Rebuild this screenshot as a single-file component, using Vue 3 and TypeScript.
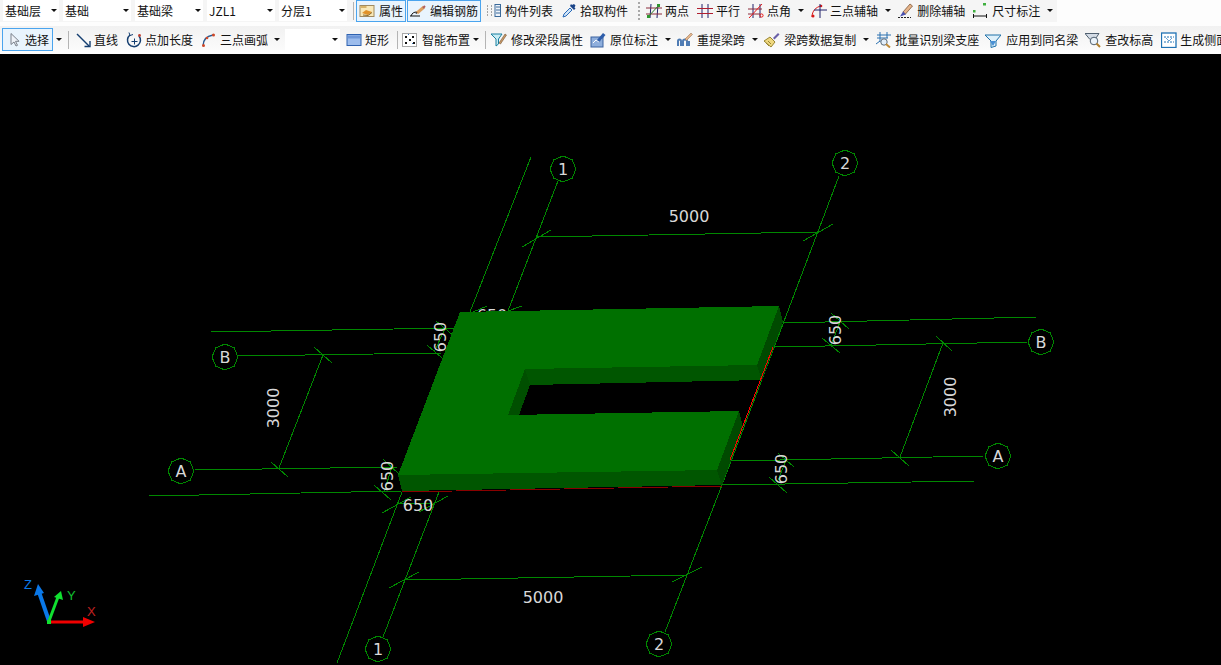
<script setup lang="ts">
type Item = {
  k: 'combo' | 'tool' | 'arrow' | 'sep' | 'grip' | 'active'
  label?: string
  icon?: string
  ml: number
  slot?: number
  w?: number
}

const tool = (label: string, icon: string, ml = 8, slot = 19): Item => ({ k: 'tool', label, icon, ml, slot })
const active = (label: string, icon: string, ml: number, slot: number): Item => ({ k: 'active', label, icon, ml, slot })
const arrow = (ml = 5): Item => ({ k: 'arrow', ml })
const sep = (ml: number): Item => ({ k: 'sep', ml })
const combo = (label: string, w: number, ml = 4): Item => ({ k: 'combo', label, w, ml })

const row1: Item[] = [
  combo('基础层', 56, 3),
  combo('基础', 68),
  combo('基础梁', 68),
  combo('JZL1', 68),
  combo('分层1', 68),
  sep(6),
  active('属性', 'attr', 2, 20),
  active('编辑钢筋', 'rebar', 1, 20),
  tool('构件列表', 'list', 5),
  tool('拾取构件', 'pick'),
  { k: 'grip', ml: 10 },
  tool('两点', 'two', 6),
  tool('平行', 'parallel'),
  tool('点角', 'angle'),
  arrow(),
  tool('三点辅轴', 'three', 6),
  arrow(),
  tool('删除辅轴', 'erase', 5, 20),
  tool('尺寸标注', 'dim', 7, 20),
  arrow(),
]

const row2: Item[] = [
  active('选择', 'cursor', 2, 17),
  arrow(1),
  sep(5),
  tool('直线', 'line', 7, 18),
  tool('点加长度', 'addLen'),
  tool('三点画弧', 'arc'),
  arrow(4),
  combo('', 55),
  tool('矩形', 'rect', 6),
  sep(8),
  tool('智能布置', 'smart', 4, 20),
  arrow(1),
  sep(5),
  tool('修改梁段属性', 'editSeg', 5, 20),
  tool('原位标注', 'orig', 7, 20),
  arrow(),
  tool('重提梁跨', 'lift', 5, 20),
  arrow(),
  tool('梁跨数据复制', 'copy', 5, 20),
  arrow(),
  tool('批量识别梁支座', 'batch', 5, 20),
  tool('应用到同名梁', 'apply', 6, 21),
  tool('查改标高', 'check', 7, 20),
  tool('生成侧面', 'side', 8, 19),
]

const icons: Record<string, string> = {
  attr: '<rect x="1" y="2.500" width="14" height="11" fill="#f8e8b8" stroke="#a08a60"/><rect x="1.500" y="3" width="6" height="2" fill="#d8b468"/><path d="M3 10l4-3 6 2-4 3z" fill="#e0922a"/><path d="M4 12l5 .5 4-3" fill="none" stroke="#8a6a30"/>',
  rebar: '<path d="M0 13h10" stroke="#111" fill="none"/><path d="M1 13c1-3 3-4 6-4" stroke="#111" fill="none"/><path d="M7 10l7-6" stroke="#dca060" stroke-width="3" fill="none"/><path d="M13 5l2-2" stroke="#b06060" stroke-width="2" fill="none"/><path d="M6 11l1-2" stroke="#333"/>',
  list: '<path d="M1 3h2M1 6h2M1 9h2M1 12h2M5 3h2M5 6h2M5 9h2M5 12h2" stroke="#555" stroke-dasharray="1 1" fill="none"/><rect x="9" y="1.500" width="5.500" height="12" fill="#eef3fa" stroke="#3a6a9a"/><path d="M10 4h4M10 7h4M10 10h4" stroke="#3a6a9a" fill="none"/>',
  pick: '<path d="M2 14l1-3 6-6 2 2-6 6z" fill="#cfe4f8" stroke="#2a6ab8"/><path d="M9 3l4 4 1.500-1.500-1-1 1-2L13 1l-2 1-1-1z" fill="#1a4488"/>',
  two: '<path d="M5 1L4 15M12 1l-1 14" stroke="#20206a" fill="none"/><path d="M0 5h16M0 11h16" stroke="#8a2a3a" fill="none"/><path d="M1 15L14 1" stroke="#2a7a2a" fill="none"/><rect x="1" y="12" width="3" height="3" fill="#2f962f"/><rect x="11" y="1" width="3" height="3" fill="#2f962f"/>',
  parallel: '<path d="M5 1v14M11 1v14" stroke="#20206a" fill="none"/><path d="M0 5.500h16M0 10.500h16" stroke="#b01f30" fill="none"/>',
  angle: '<path d="M5 1v14M12 1v14" stroke="#20206a" fill="none"/><path d="M0 6h14M0 11h12" stroke="#8a2a3a" fill="none"/><path d="M1 15L14 1" stroke="#e81818" fill="none"/><circle cx="13.500" cy="12.500" r="1.600" fill="none" stroke="#e81818"/>',
  three: '<path d="M1 14c0-6 4-10 9-11" stroke="#d81818" fill="none"/><circle cx="2" cy="13" r="1.500" fill="#d81818"/><circle cx="10" cy="3" r="1.300" fill="#d81818"/><path d="M9 1v14M3 7h13" stroke="#20206a" fill="none"/>',
  erase: '<path d="M1 14.500h13" stroke="#222" stroke-dasharray="2 1" fill="none"/><path d="M6 9l7-8 2.500 2-7 8z" fill="#e6b48a" stroke="#704828" stroke-width=".7"/><path d="M3 13.500l3-5 3 3z" fill="#4a52b0"/>',
  dim: '<rect x="1" y="7" width="2.500" height="2.500" fill="#40b040"/><rect x="11" y="0" width="3" height="2.500" fill="#40b040"/><path d="M1.500 11v4M14.500 11v4M1.500 13h13" stroke="#111" fill="none"/>',
  cursor: '<path d="M3 1.500v11l3-2.500 2 4 1.500-.7-2-4h3.600z" fill="#eef2f8" stroke="#7a808a"/>',
  line: '<path d="M1 2l12 12" stroke="#143e70" stroke-width="1.400" fill="none"/><path d="M14 9v5.500H8.500" stroke="#143e70" stroke-width="1.400" fill="none"/>',
  addLen: '<path d="M4 3a6.500 6.500 0 1 0 9 1" stroke="#143e70" stroke-width="1.500" fill="none"/><path d="M3 .5l1 3 3-1" stroke="#143e70" fill="none"/><path d="M8.500 6.500v6M5.500 9.500h6" stroke="#143e70" fill="none"/><circle cx="13.500" cy="3.500" r="1.400" fill="#c04030"/>',
  arc: '<path d="M2 14c0-6 4-10 10-11" stroke="#2a5a90" stroke-width="1.400" fill="none"/><circle cx="2.500" cy="13.500" r="1.500" fill="#d04828"/><circle cx="6" cy="6" r="1.300" fill="#d04828"/><circle cx="12.500" cy="3" r="1.500" fill="#d04828"/>',
  rect: '<rect x="1" y="2.500" width="14" height="11" fill="#9cbcec" stroke="#2f62b0"/><rect x="2" y="3.500" width="12" height="3" fill="#6f97d8"/>',
  smart: '<rect x=".5" y="1.500" width="14" height="13" fill="#fff" stroke="#555" stroke-dasharray="1 1"/><path d="M3 4h2v2H3zM10 4h2v2h-2zM7 7h2v2H7zM3 10h2v2H3zM11 10h2v2h-2z" fill="#111"/><path d="M6 2h1v1H6zM10 11h1v1h-1z" fill="#3a78c0"/>',
  editSeg: '<path d="M0 2h11L7.500 7v5L5 14V7z" fill="#c8ecf4" stroke="#1a80a0"/><path d="M8 11l6-9 1.500 1-6 9z" fill="#c89a68" stroke="#604020" stroke-width=".5"/>',
  orig: '<rect x="1" y="5" width="12" height="10" fill="#8eaedc" stroke="#3a62a0"/><path d="M3 11l3-3 3 2 3-3" stroke="#fff" fill="none"/><path d="M7 8l6-7 2.500 2-6 7z" fill="#2f5eaa"/>',
  lift: '<path d="M1 14V9c0-2 3-2 3 0v5M6 14V9c0-2 4-2 4 0v5M12 14V9" stroke="#4f7cb4" stroke-width="2" fill="none"/><path d="M8 7l6-6 1.500 1.500-6 6z" fill="#e4b48a" stroke="#906a48" stroke-width=".5"/>',
  copy: '<path d="M0 9l7 6 4-5-5-5z" fill="#efd880" stroke="#988430"/><path d="M9 6l5-5 1.500 1.500-5 5z" fill="#6a60a8"/><path d="M2 11l3 3M4 9l3 3" stroke="#988430" fill="none"/>',
  batch: '<path d="M2 3h14M2 6h11M5 0v10M12 0v6M1 12l4-3" stroke="#2a70b0" fill="none"/><circle cx="9" cy="10" r="3.200" fill="#e2eefa" stroke="#5a6a7a"/><path d="M11 12l4 3.500" stroke="#c08a38" stroke-width="2" fill="none"/>',
  apply: '<path d="M0 3h16l-5 6v5l-5 1.500V9z" fill="#dff0fa" stroke="#1f70a8"/><path d="M5 9h6l-3 5z" fill="#4a90d4"/>',
  check: '<path d="M0 1.500h14l-4 6H5z" fill="#d4dce6" stroke="#506070"/><circle cx="9" cy="9" r="3.800" fill="#eaf3fb" stroke="#506070"/><path d="M11.500 11.500l3.500 3.500" stroke="#b08030" stroke-width="2" fill="none"/>',
  side: '<rect x=".5" y="1" width="14.500" height="14.500" fill="#fff" stroke="#1f72b4" stroke-width="1.300"/><path d="M3 5h10M3 10h10" stroke="#1f72b4" stroke-dasharray="2 1" fill="none"/><path d="M5 6l3 3 3-3" stroke="#6aa0d0" fill="none"/>',
}

// canvas geometry, page coordinates
const lines: number[][] = [
  [531, 157, 470, 312], [558, 181, 508, 311], [839, 176, 722, 485],
  [337, 663, 402, 492], [383, 637, 439, 492], [665, 632, 722, 485],
  [211, 332, 455, 328], [238, 356, 442, 353], [195, 470, 398, 467], [149, 496, 402, 491],
  [783, 323, 1037, 317], [775, 347, 1028, 342], [730, 461, 984, 456], [722, 485, 975, 481],
  [536, 237, 818, 232], [522, 247, 551, 230], [803, 241, 833, 224],
  [405, 580, 687, 575], [389, 588, 419, 572], [672, 582, 702, 567],
  [323, 355, 279, 468], [314, 347, 332, 363], [271, 462, 288, 477],
  [943, 343, 900, 457], [936, 336, 952, 351], [891, 450, 909, 466],
  [427, 345, 442, 358], [436, 321, 455, 337], [445, 329, 434, 352],
  [374, 485, 391, 500], [383, 459, 400, 475], [392, 467, 384, 492],
  [382, 513, 411, 497], [419, 512, 448, 496], [398, 504, 433, 503],
  [473, 312, 487, 306], [508, 311, 522, 306],
  [831, 313, 849, 329], [822, 338, 840, 353], [840, 322, 831, 345],
  [778, 453, 794, 467], [769, 477, 787, 493], [786, 460, 777, 483],
]

const axisMarks = [
  { x: 563, y: 169, t: '1' }, { x: 845, y: 163, t: '2' },
  { x: 378, y: 649, t: '1' }, { x: 659, y: 644, t: '2' },
  { x: 225, y: 357, t: 'B' }, { x: 181, y: 471, t: 'A' },
  { x: 1041, y: 342, t: 'B' }, { x: 998, y: 456, t: 'A' },
]

const octagon = (cx: number, cy: number) =>
  Array.from({ length: 8 }, (_, i) => {
    const a = (i * Math.PI) / 4
    return `${cx + 13 * Math.sin(a)},${cy - 13 * Math.cos(a)}`
  }).join(' ')

const dims = [
  { x: 689, y: 216, t: '5000', r: 0 }, { x: 543, y: 597, t: '5000', r: 0 },
  { x: 273, y: 408, t: '3000', r: -90 }, { x: 950, y: 397, t: '3000', r: -90 },
  { x: 440, y: 337, t: '650', r: -90 }, { x: 387, y: 476, t: '650', r: -90 },
  { x: 835, y: 330, t: '650', r: -90 }, { x: 781, y: 469, t: '650', r: -90 },
  { x: 418, y: 505, t: '650', r: 0 }, { x: 492, y: 315, t: '650', r: 0 },
]
</script>

<template>
  <div class="page">
    <div class="toolbar">
      <div class="row row-top">
        <div class="row-inner">
          <template v-for="(item, i) in row1" :key="i">
            <div v-if="item.k === 'combo'" class="combo" :style="{ marginLeft: item.ml + 'px', width: item.w + 'px' }">
              <span>{{ item.label }}</span><i class="caret"></i>
            </div>
            <div v-else-if="item.k === 'sep'" class="sep" :style="{ marginLeft: item.ml + 'px' }"></div>
            <div v-else-if="item.k === 'grip'" class="grip" :style="{ marginLeft: item.ml + 'px' }"></div>
            <div v-else-if="item.k === 'arrow'" class="arrow" :style="{ marginLeft: item.ml + 'px' }"><i class="caret"></i></div>
            <div v-else class="tool" :class="{ active: item.k === 'active' }" :style="{ marginLeft: item.ml + 'px' }">
              <span class="ico" :style="{ width: item.slot + 'px' }"><svg viewBox="0 0 16 16" width="16" height="16" v-html="icons[item.icon!]"></svg></span>
              <span>{{ item.label }}</span>
            </div>
          </template>
        </div>
      </div>
      <div class="row row-bottom">
        <template v-for="(item, i) in row2" :key="i">
          <div v-if="item.k === 'combo'" class="combo" :style="{ marginLeft: item.ml + 'px', width: item.w + 'px' }">
            <span>{{ item.label }}</span><i class="caret"></i>
          </div>
          <div v-else-if="item.k === 'sep'" class="sep" :style="{ marginLeft: item.ml + 'px' }"></div>
          <div v-else-if="item.k === 'arrow'" class="arrow" :style="{ marginLeft: item.ml + 'px' }"><i class="caret"></i></div>
          <div v-else class="tool" :class="{ active: item.k === 'active', 'select-btn': item.icon === 'cursor' }" :style="{ marginLeft: item.ml + 'px' }">
            <span class="ico" :style="{ width: item.slot + 'px' }"><svg viewBox="0 0 16 16" width="16" height="16" v-html="icons[item.icon!]"></svg></span>
            <span>{{ item.label }}</span>
          </div>
        </template>
      </div>
    </div>

    <svg class="canvas" viewBox="0 54 1221 611" width="1221" height="611">
      <g stroke="#008800" fill="none" shape-rendering="crispEdges">
        <line v-for="(l, i) in lines" :key="i" :x1="l[0]" :y1="l[1]" :x2="l[2]" :y2="l[3]" />
        <polygon v-for="m in axisMarks" :key="m.x" :points="octagon(m.x, m.y)" />
      </g>
      <g class="cad-text">
        <text v-for="m in axisMarks" :key="m.x" :x="m.x" :y="m.y" text-anchor="middle" dominant-baseline="central">{{ m.t }}</text>
        <text
          v-for="d in dims"
          :key="d.x"
          :x="d.x"
          :y="d.y"
          text-anchor="middle"
          dominant-baseline="central"
          :transform="`rotate(${d.r} ${d.x} ${d.y})`"
        >{{ d.t }}</text>
      </g>

      <!-- beam solid -->
      <g shape-rendering="crispEdges">
        <polygon points="398,475 717,470 722,485 402,491" fill="#005600" />
        <polygon points="717,470 739,411 743,427 722,485" fill="#004a00" />
        <polygon points="525,369 757,365 762,380 530,385" fill="#005600" />
        <polygon points="525,369 508,415 519,415 530,385" fill="#004f00" />
        <polygon points="779,306 783,322 762,380 757,365" fill="#004a00" />
        <polygon
          points="460,312 779,306 757,365 525,369 508,415 739,411 717,470 398,475"
          fill="#007000"
        />
      </g>
      <g fill="none" shape-rendering="crispEdges">
        <line x1="402" y1="492" x2="722" y2="486" stroke="#8a0000" stroke-dasharray="50 4" />
        <line x1="773" y1="347" x2="730" y2="460" stroke="#ff0000" />
      </g>

      <!-- ucs -->
      <g fill="none">
        <line x1="49" y1="621" x2="39" y2="592" stroke="#0a78e8" stroke-width="4" />
        <polygon points="38,584 34,596 44,593" fill="#0a78e8" />
        <line x1="49" y1="621" x2="58" y2="597" stroke="#10e030" stroke-width="3" />
        <polygon points="61,591 54,597 63,600" fill="#10e030" />
        <line x1="49" y1="622" x2="84" y2="622" stroke="#f00000" stroke-width="3" />
        <polygon points="95,622 83,617 83,627" fill="#f00000" />
        <rect x="47" y="620" width="4" height="4" fill="#10e030" />
      </g>
      <g class="ucs-text">
        <text x="24" y="589" fill="#0a78e8">Z</text>
        <text x="67" y="600" fill="#10c030">Y</text>
        <text x="87" y="616" fill="#c02020">X</text>
      </g>
    </svg>
  </div>
</template>

<style scoped>
.page {
  width: 1221px;
  height: 665px;
  display: flex;
  flex-direction: column;
  overflow: hidden;
  background: #000;
  font-family: "Noto Sans CJK SC", "Liberation Sans", sans-serif;
  font-size: 12px;
  color: #111;
}

.toolbar {
  height: 54px;
  background: #fdfdfd;
  display: flex;
  flex-direction: column;
  flex-shrink: 0;
}

.row {
  display: flex;
  align-items: center;
  white-space: nowrap;
}

.row-top {
  height: 22px;
}

.row-inner {
  width: 1057px;
  height: 22px;
  padding-bottom: 1px;
  box-sizing: border-box;
  display: flex;
  align-items: center;
  background: #f5f5f5;
}

.row-inner .active {
  height: 22px;
  padding-bottom: 1px;
  align-self: flex-start;
}

.row-bottom {
  height: 28px;
  margin-top: 4px;
  padding-bottom: 1px;
  box-sizing: border-box;
  overflow: hidden;
  background: linear-gradient(#f1f1f1, #fdfdfd);
}

.combo {
  height: 21px;
  flex-shrink: 0;
  display: flex;
  align-items: center;
  justify-content: space-between;
  padding: 0 2px;
  box-sizing: border-box;
  background: #fff;
}

.caret {
  display: block;
  width: 0;
  height: 0;
  border-left: 3px solid transparent;
  border-right: 3px solid transparent;
  border-top: 3px solid #111;
}

.arrow {
  width: 9px;
  display: flex;
  justify-content: center;
  flex-shrink: 0;
}

.sep {
  width: 1px;
  height: 18px;
  flex-shrink: 0;
  background: #b4b4b4;
}

.grip {
  width: 2px;
  height: 18px;
  flex-shrink: 0;
  background: repeating-linear-gradient(#a8a8a8 0 2px, transparent 2px 4px);
}

.tool {
  display: flex;
  align-items: center;
  flex-shrink: 0;
  line-height: 16px;
}

.ico {
  display: block;
  height: 16px;
  flex-shrink: 0;
}

.ico svg {
  display: block;
}

.active {
  height: 23px;
  box-sizing: border-box;
  padding: 0 2px;
  border: 1px solid #4aa4ee;
  background: #e9f4fd;
}

.select-btn {
  padding-left: 5px;
  padding-right: 2px;
  width: 51px;
}

.canvas {
  display: block;
  flex: 1;
  background: #000;
}

.cad-text text {
  font-family: "DejaVu Sans", sans-serif;
  font-size: 16px;
  fill: #d8d8d8;
}

.ucs-text text {
  font-family: "Liberation Sans", sans-serif;
  font-size: 13px;
}
</style>
